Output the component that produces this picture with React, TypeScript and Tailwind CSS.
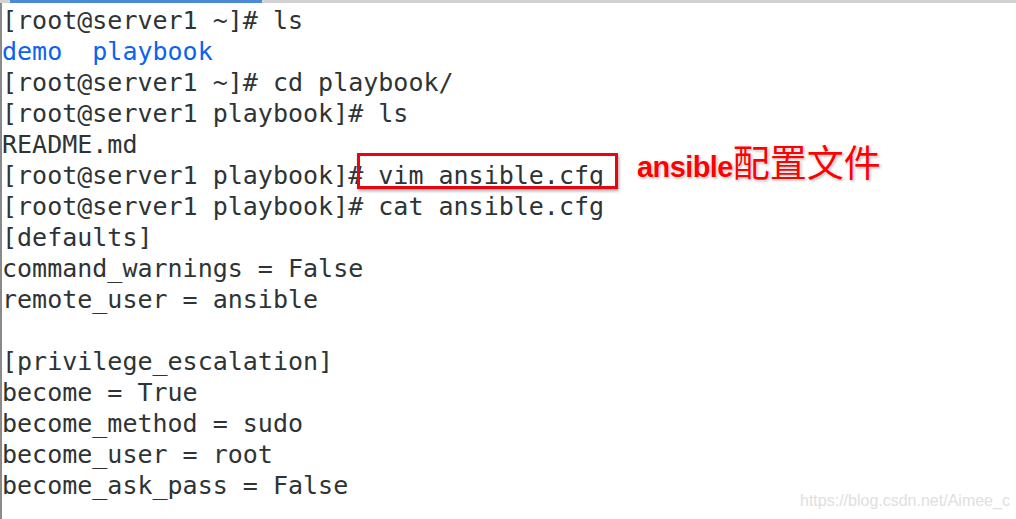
import React from "react";

const lines: { t: string; blue?: boolean }[] = [
  { t: "[root@server1 ~]# ls" },
  { t: "demo  playbook", blue: true },
  { t: "[root@server1 ~]# cd playbook/" },
  { t: "[root@server1 playbook]# ls" },
  { t: "README.md" },
  { t: "[root@server1 playbook]# vim ansible.cfg" },
  { t: "[root@server1 playbook]# cat ansible.cfg" },
  { t: "[defaults]" },
  { t: "command_warnings = False" },
  { t: "remote_user = ansible" },
  { t: "" },
  { t: "[privilege_escalation]" },
  { t: "become = True" },
  { t: "become_method = sudo" },
  { t: "become_user = root" },
  { t: "become_ask_pass = False" },
];

export default function App() {
  return (
    <div className="relative w-[1016px] h-[519px] bg-white overflow-hidden">
      <div className="h-[3px] bg-[#d3d3d3] flex">
        <div className="ml-[10px] w-[252px] h-[3px] bg-[#4a8ad8]" />
      </div>
      <div className="flex h-[516px]">
        <div className="w-[2px] bg-[#8a8a8a]" />
        <div className="pt-[2px] font-['DejaVu_Sans_Mono',monospace] text-[25px] leading-[31px] text-[#2e3436] whitespace-pre">
          {lines.map((l, i) => (
            <div key={i} className={l.blue ? "h-[31px] text-[#0b63ee]" : "h-[31px]"}>
              {l.t}
            </div>
          ))}
        </div>
      </div>
      <div className="absolute left-[357px] top-[153px] w-[261px] h-[36px] border-[3px] border-[#e8050f] shadow-[1px_2px_3px_rgba(0,0,0,0.35)]" />
      <div className="absolute left-[637px] top-[134px] flex items-baseline text-[#ff0000] [text-shadow:0_0_2px_#fff,0_0_3px_#fff,1px_1px_3px_rgba(0,0,0,0.45)]">
        <span className="font-['Liberation_Sans',sans-serif] font-bold text-[29px] tracking-[-0.6px]">ansible</span>
        <span className="font-['Noto_Sans_CJK_SC',sans-serif] text-[37px]">配置文件</span>
      </div>
      <div className="absolute left-[800px] top-[489px] font-['Liberation_Sans',sans-serif] text-[16px] text-[#e0e0e0]">
        https://blog.csdn.net/Aimee_c
      </div>
    </div>
  );
}
